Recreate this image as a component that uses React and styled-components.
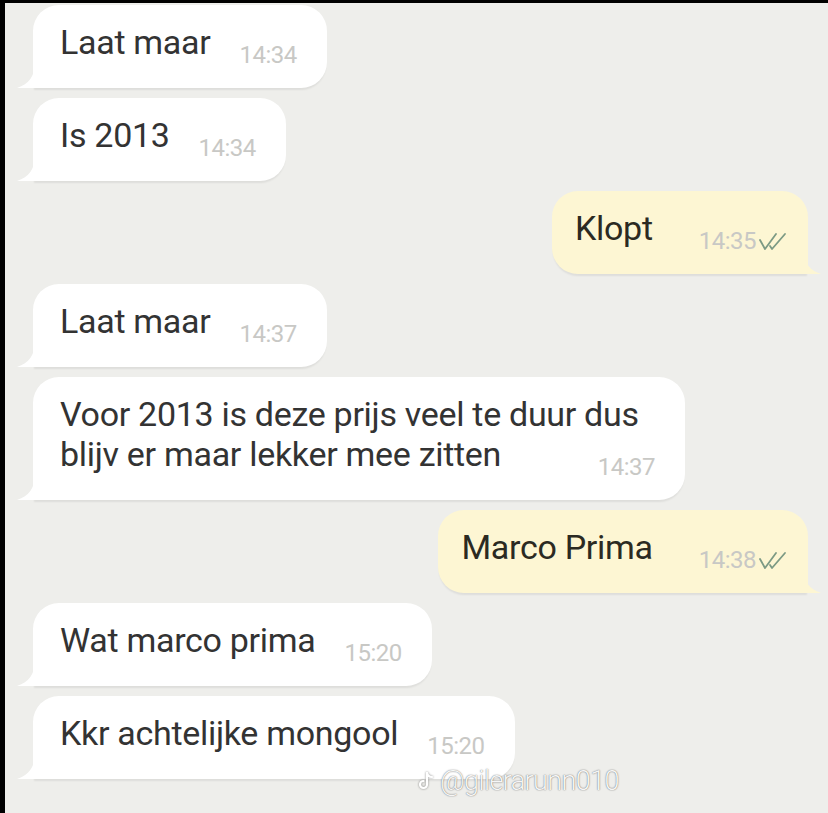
import styled, { createGlobalStyle } from 'styled-components';

const GlobalStyle = createGlobalStyle`
  html, body {
    margin: 0;
    padding: 0;
    background: #000;
  }
  body {
    font-family: Roboto, "Noto Sans", "Liberation Sans", sans-serif;
  }
`;

const Frame = styled.div`
  width: 828px;
  height: 813px;
  box-sizing: border-box;
  padding: 3px 0 0 5px;
  background: #000;
  overflow: hidden;
`;

const Chat = styled.main`
  position: relative;
  height: 100%;
  background: #eeeeeb;
  display: flex;
  flex-direction: column;
  gap: 10px;
  padding: 2px 20px 0 28px;
  box-sizing: border-box;
`;

const Row = styled.div`
  display: flex;
  justify-content: ${p => (p.$out ? 'flex-end' : 'flex-start')};
`;

const Bubble = styled.div`
  position: relative;
  max-width: 652px;
  box-sizing: border-box;
  padding: ${p => (p.$out ? '17px 20px 26px 23px' : '17px 30px 26px 27px')};
  background: ${p => (p.$out ? '#fdf6d3' : '#ffffff')};
  border-radius: 26px;
  border-bottom-left-radius: ${p => (p.$out ? '26px' : '0')};
  border-bottom-right-radius: ${p => (p.$out ? '0' : '26px')};
  box-shadow: 0 3px 2px -1px rgba(0, 0, 0, 0.07);
  color: ${p => (p.$out ? '#2b2a22' : '#333333')};
  font-size: 34px;
  line-height: 40px;
  letter-spacing: -0.3px;

  &::before {
    content: '';
    position: absolute;
    bottom: 0;
    width: 18px;
    height: 26px;
    background: inherit;
    ${p =>
      p.$out
        ? `right: -13px; clip-path: path('M0 0 C0 14 6 22 18 26 L0 26 Z');`
        : `left: -16px; clip-path: path('M18 0 C18 14 12 22 0 26 L18 26 Z');`}
  }
`;

const Meta = styled.span`
  float: right;
  display: inline-flex;
  align-items: center;
  gap: 1px;
  margin: 22px 0 -22px ${p => (p.$out ? '46px' : '29px')};
  font-size: 24px;
  line-height: 22px;
  letter-spacing: -0.5px;
  color: #c8c8c5;
`;

const Ticks = styled.svg`
  width: 31px;
  height: 20px;
`;

const Watermark = styled.div`
  position: absolute;
  left: 413px;
  top: 762px;
  display: flex;
  align-items: center;
  gap: 6px;
  font-size: 27px;
  font-weight: 300;
  letter-spacing: -0.6px;
  color: rgba(255, 255, 255, 0.95);
  text-shadow: 0 0 1px rgba(0, 0, 0, 0.5), 0 0 2px rgba(0, 0, 0, 0.25);
`;

const NoteIcon = styled.svg`
  width: 16px;
  height: 20px;
  filter: drop-shadow(0 0 1px rgba(0, 0, 0, 0.45));
`;

const messages = [
  { text: 'Laat maar', time: '14:34' },
  { text: 'Is 2013', time: '14:34' },
  { text: 'Klopt', time: '14:35', out: true },
  { text: 'Laat maar', time: '14:37' },
  { text: 'Voor 2013 is deze prijs veel te duur dus blijv er maar lekker mee zitten', time: '14:37' },
  { text: 'Marco Prima', time: '14:38', out: true },
  { text: 'Wat marco prima', time: '15:20' },
  { text: 'Kkr achtelijke mongool', time: '15:20' },
];

const DoubleTick = () => (
  <Ticks viewBox="0 0 31 20" fill="none" stroke="#7c9a84" strokeWidth="1.8" strokeLinecap="round" strokeLinejoin="round">
    <path d="M3 9 L8 18 L19 3" />
    <path d="M13 15 L15 18 L28 3" />
  </Ticks>
);

export default function App() {
  return (
    <>
      <GlobalStyle />
      <Frame>
        <Chat>
          {messages.map((m, i) => (
            <Row key={i} $out={m.out}>
              <Bubble $out={m.out}>
                {m.text}
                <Meta $out={m.out}>
                  {m.time}
                  {m.out && <DoubleTick />}
                </Meta>
              </Bubble>
            </Row>
          ))}
          <Watermark>
            <NoteIcon viewBox="0 0 16 20" fill="none" stroke="#fff" strokeWidth="2.2" strokeLinecap="round">
              <path d="M9 2 V13.5 A3.5 3.5 0 1 1 5.5 10" />
              <path d="M9 2 C9.5 4.5 11.5 6 14 6" />
            </NoteIcon>
            @gilerarunn010
          </Watermark>
        </Chat>
      </Frame>
    </>
  );
}
